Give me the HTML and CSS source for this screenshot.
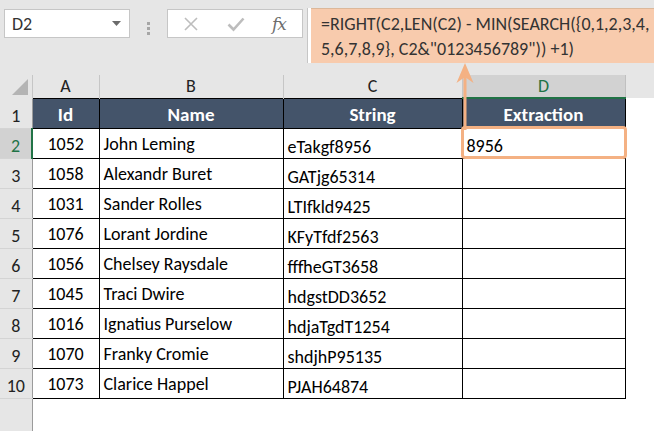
FILE: index.html
```html
<!DOCTYPE html>
<html>
<head>
<meta charset="utf-8">
<link rel="stylesheet" href="styles.css">
</head>
<body>
<div class="app">
  <div class="toolbar">
    <div class="namebox">
      <span class="ref">D2</span>
      <svg class="caret" width="9" height="5" viewBox="0 0 9 5"><path d="M0 0H9L4.5 5Z" fill="#6b6b6b"/></svg>
    </div>
    <div class="grip"><i></i><i></i><i></i></div>
    <div class="fbtns">
      <svg class="btn" width="16" height="16" viewBox="0 0 16 16"><path d="M2 2L14 14M14 2L2 14" stroke="#bdbdbd" stroke-width="1.6" fill="none"/></svg>
      <svg class="btn" width="18" height="16" viewBox="0 0 18 16"><path d="M1.5 8.5L6.5 13.5L16.5 2.5" stroke="#bdbdbd" stroke-width="2.6" fill="none"/></svg>
      <span class="fx">fx</span>
    </div>
    <div class="fbar">
      <div class="fbar-in">=RIGHT(C2,LEN(C2) - MIN(SEARCH({0,1,2,3,4,<br>5,6,7,8,9}, C2&amp;"0123456789")) +1)</div>
    </div>
  </div>

  <table class="sheet">
    <colgroup>
      <col class="c-rh"><col class="c-a"><col class="c-b"><col class="c-c"><col class="c-d"><col class="c-x">
    </colgroup>
    <tr class="letters">
      <td class="corner"><span class="tri"></span></td>
      <td class="lt">A</td><td class="lt">B</td><td class="lt">C</td><td class="lt sel">D</td><td class="lt-x"></td>
    </tr>
    <tr class="head">
      <td class="rh">1</td>
      <th>Id</th><th>Name</th><th>String</th><th>Extraction</th><td class="x"></td>
    </tr>
    <tr><td class="rh sel">2</td><td class="id">1052</td><td class="nm">John Leming</td><td class="st">eTakgf8956</td><td class="ex">8956</td><td class="x"></td></tr>
    <tr><td class="rh">3</td><td class="id">1058</td><td class="nm">Alexandr Buret</td><td class="st">GATjg65314</td><td class="ex"></td><td class="x"></td></tr>
    <tr><td class="rh">4</td><td class="id">1031</td><td class="nm">Sander Rolles</td><td class="st">LTIfkld9425</td><td class="ex"></td><td class="x"></td></tr>
    <tr><td class="rh">5</td><td class="id">1076</td><td class="nm">Lorant Jordine</td><td class="st">KFyTfdf2563</td><td class="ex"></td><td class="x"></td></tr>
    <tr><td class="rh">6</td><td class="id">1056</td><td class="nm">Chelsey Raysdale</td><td class="st">fffheGT3658</td><td class="ex"></td><td class="x"></td></tr>
    <tr><td class="rh">7</td><td class="id">1045</td><td class="nm">Traci Dwire</td><td class="st">hdgstDD3652</td><td class="ex"></td><td class="x"></td></tr>
    <tr><td class="rh">8</td><td class="id">1016</td><td class="nm">Ignatius Purselow</td><td class="st">hdjaTgdT1254</td><td class="ex"></td><td class="x"></td></tr>
    <tr><td class="rh">9</td><td class="id">1070</td><td class="nm">Franky Cromie</td><td class="st">shdjhP95135</td><td class="ex"></td><td class="x"></td></tr>
    <tr><td class="rh">10</td><td class="id">1073</td><td class="nm">Clarice Happel</td><td class="st">PJAH64874</td><td class="ex"></td><td class="x"></td></tr>
    <tr class="filler"><td class="rh"></td><td class="blank" colspan="5"></td></tr>
  </table>

  <div class="selbox"></div>
  <svg class="arrow" width="24" height="70" viewBox="0 0 24 70">
    <path d="M12 68V14" stroke="#f4b183" stroke-width="3" fill="none"/>
    <path d="M12 1L20.5 21L12 15L3.5 21Z" fill="#f4b183"/>
  </svg>
</div>
</body>
</html>
```

FILE: styles.css
```css
* { box-sizing: border-box; }
html, body { margin: 0; padding: 0; }
body {
  width: 654px;
  height: 431px;
  overflow: hidden;
  background: #e6e6e6;
  font-family: Carlito, "Open Sans", "Liberation Sans", sans-serif;
  color: #000;
}
.app { position: relative; width: 654px; height: 431px; }

.toolbar {
  height: 75px;
  display: flex;
  align-items: flex-start;
  padding-top: 8px;
}
.namebox {
  margin-left: 4px;
  margin-top: 1px;
  width: 126px;
  height: 29px;
  background: #fff;
  border: 1px solid #c6c6c6;
  display: flex;
  align-items: center;
  justify-content: space-between;
  padding: 0 8px 0 7px;
}
.ref { font-size: 18px; color: #333; }
.grip {
  margin-left: 17px;
  margin-top: 14px;
  display: flex;
  flex-direction: column;
  gap: 2px;
}
.grip i { display: block; width: 3px; height: 3px; background: #a6a6a6; }
.fbtns {
  margin-left: 17px;
  margin-top: 1px;
  width: 136px;
  height: 29px;
  background: #fff;
  border: 1px solid #c6c6c6;
  display: flex;
  align-items: center;
  padding-left: 15px;
}
.fbtns .btn { display: block; }
.fbtns .btn + .btn { margin-left: 28px; }
.fx {
  margin-left: 27px;
  font-family: "DejaVu Serif", "Liberation Serif", serif;
  font-style: italic;
  font-size: 17px;
  color: #6d6d6d;
  letter-spacing: -1px;
}
.fbar {
  margin-left: 4px;
  flex: 1;
  height: 55px;
  background: #fff;
  border-left: 1px solid #c6c6c6;
  padding-left: 3px;
}
.fbar-in {
  height: 100%;
  background: #f8cbad;
  border-top: 1px solid #dcb89a;
  padding: 3px 0 0 10px;
  font-size: 18px;
  line-height: 25px;
  color: #333;
  white-space: nowrap;
  overflow: hidden;
}

.sheet {
  border-collapse: collapse;
  table-layout: fixed;
  width: 654px;
}
.c-rh { width: 32px; }
.c-a { width: 67px; }
.c-b { width: 184px; }
.c-c { width: 179px; }
.c-d { width: 163px; }
.c-x { width: 29px; }
.sheet td, .sheet th { padding: 0; }

.letters td { height: 23px; }
.corner {
  position: relative;
  background: #e6e6e6;
  border-right: 1px solid #c6c6c6;
}
.tri {
  position: absolute;
  right: 4px;
  bottom: 3px;
  width: 0; height: 0;
  border-left: 16px solid transparent;
  border-bottom: 16px solid #b4b4b4;
}
.lt {
  background: #e6e6e6;
  border-right: 1px solid #c6c6c6;
  text-align: center;
  font-size: 18px;
  color: #222;
  vertical-align: middle;
}
.lt.sel {
  background: #d2d2d2;
  color: #217346;
  border-bottom: 2px solid #217346;
  border-right: 1px solid #c0c0c0;
}
.lt-x { background: #e6e6e6; }

.rh {
  background: #e6e6e6;
  border-right: 1px solid #9b9b9b;
  border-bottom: 1px solid #d4d4d4;
  text-align: center;
  font-size: 18px;
  color: #222;
  height: 30px;
  vertical-align: bottom;
  padding-bottom: 1px !important;
}
.rh.sel {
  background: #d2d2d2;
  color: #217346;
  border-right: 2px solid #217346;
}
.head th {
  background: #44546a;
  color: #fff;
  font-weight: bold;
  font-size: 19px;
  border: 1px solid #000;
  vertical-align: middle;
  padding-top: 2px;
}
.sheet td.id, .sheet td.nm, .sheet td.st, .sheet td.ex {
  background: #fff;
  border: 1px solid #000;
  font-size: 18px;
  height: 30px;
}
.id { text-align: center; vertical-align: middle; padding-top: 1px !important; }
.nm { vertical-align: middle; padding: 1px 0 0 4px !important; }
.st { vertical-align: bottom; padding: 0 0 0 4px !important; }
.ex { vertical-align: bottom; padding: 0 0 1px 4px !important; }
.x { background: #fff; }
.filler td { height: 40px; }
.filler .rh { border-bottom: none; }
.blank { background: #fff; }

.selbox {
  position: absolute;
  left: 461px;
  top: 126px;
  width: 166px;
  height: 33px;
  border: 3px solid #f4b183;
  border-radius: 4px;
}
.arrow {
  position: absolute;
  left: 453px;
  top: 62px;
}
```
